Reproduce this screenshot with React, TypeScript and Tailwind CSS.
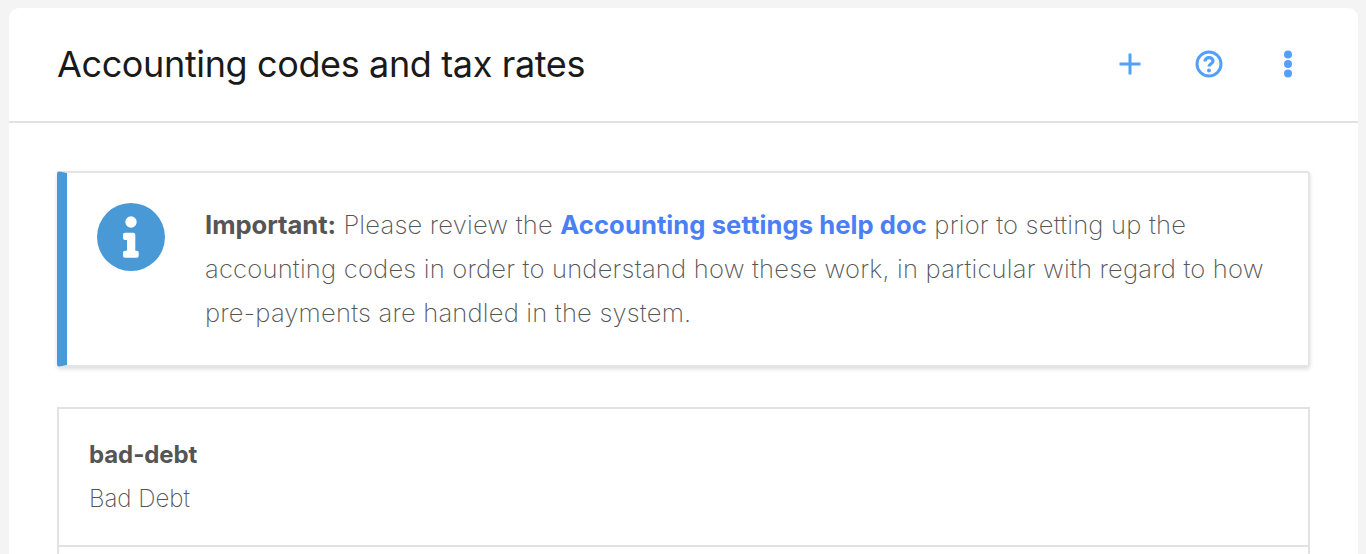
const codes = [{ code: "bad-debt", name: "Bad Debt" }];

export default function App() {
  return (
    <div className="h-[554px] overflow-hidden bg-[#f4f4f4] pt-2 pl-[9px] pr-2 font-['Inter',sans-serif]">
      <div className="rounded-t-[10px] bg-white">
        {/* Header */}
        <div className="flex h-[115px] items-center justify-between border-b-2 border-[#e2e2e2] pl-12 pr-[56px]">
          <h1 className="-mt-[2px] text-[36px] font-normal tracking-[-0.37px] text-[#1a1a1a]">Accounting codes and tax rates</h1>
          <div className="-mt-[2px] flex items-center gap-[51px] text-[#549ffb]">
            <svg width="28" height="28" viewBox="0 0 28 28" fill="none" stroke="currentColor" strokeWidth="3">
              <path d="M14 3.5v21M3.5 14h21" />
            </svg>
            <svg width="28" height="28" viewBox="0 0 28 28" fill="none" stroke="currentColor" strokeWidth="3">
              <circle cx="14" cy="14" r="12" />
              <path d="M10 11.5c0-2.4 1.8-3.8 4-3.8s4 1.3 4 3.4c0 2.9-4 2.9-4 5.4" strokeWidth="3.2" />
              <circle cx="14" cy="20.6" r="2" fill="currentColor" stroke="none" />
            </svg>
            <div className="flex w-[28px] justify-center">
              <svg width="8" height="28" viewBox="0 0 8 28" fill="currentColor">
                <circle cx="4" cy="4.5" r="4" />
                <circle cx="4" cy="14" r="4" />
                <circle cx="4" cy="23.5" r="4" />
              </svg>
            </div>
          </div>
        </div>

        <div className="px-12 pt-[48px]">
          {/* Notice */}
          <div className="flex h-[196px] rounded-[3px] border-2 border-l-[10px] border-[#e4e4e4] border-l-[#4899d6] shadow-[0_2px_4px_rgba(0,0,0,0.14)]">
            <div className="pl-[30px] pt-[30px]">
              <svg width="68" height="68" viewBox="0 0 68 68">
                <circle cx="34" cy="34" r="34" fill="#4899d6" />
                <circle cx="34" cy="19" r="5.7" fill="#fff" />
                <path d="M28 29.7h8.3a2 2 0 0 1 2 2V47.7h1.4a2 2 0 0 1 2 2v3a2 2 0 0 1-2 2H28a2 2 0 0 1-2-2v-3a2 2 0 0 1 2-2h2V37h-2a2 2 0 0 1-2-2v-3.3a2 2 0 0 1 2-2z" fill="#fff" />
              </svg>
            </div>
            <p className="pl-[40px] pr-10 pt-[30px] text-[25.6px] leading-[44px] font-[250] tracking-[0.18px] text-[#555]">
              <strong className="font-bold tracking-[-0.05px]">Important:</strong> Please review the{" "}
              <a className="font-bold tracking-[0.07px] text-[#4a7ff5]">Accounting settings help doc</a> prior to setting up the accounting codes in order to understand how these work, in particular with regard to how pre-payments are handled in the system.
            </p>
          </div>

          <div className="mt-[40px] h-[200px] border-2 border-[#e2e2e2]">
            {codes.map((c) => (
              <div key={c.code} className="h-[138px] border-b-2 border-[#e2e2e2] pl-[30px] pt-[24px] text-[#555]">
                <div className="text-[24px] leading-[44px] font-bold tracking-[-0.1px]">{c.code}</div>
                <div className="text-[24px] leading-[44px] font-[250]">{c.name}</div>
              </div>
            ))}
          </div>
        </div>
      </div>
    </div>
  );
}
